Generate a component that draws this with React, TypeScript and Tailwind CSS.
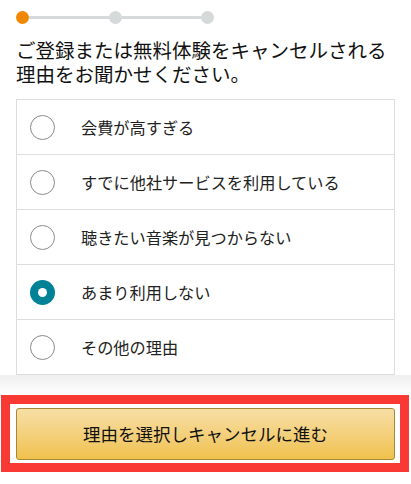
import React, { useState } from 'react';

const reasons = [
  '会費が高すぎる',
  'すでに他社サービスを利用している',
  '聴きたい音楽が見つからない',
  'あまり利用しない',
  'その他の理由',
];

function Radio({ checked }: { checked: boolean }) {
  if (checked) {
    return (
      <span className="w-[25px] h-[25px] rounded-full bg-[#008296] flex items-center justify-center shrink-0">
        <span className="w-[9px] h-[9px] rounded-full bg-white" />
      </span>
    );
  }
  return <span className="w-[25px] h-[25px] rounded-full border border-[#8a8a8a] bg-white shrink-0" />;
}

export default function App() {
  const [selected, setSelected] = useState(3);

  return (
    <div className="w-[411px] h-[484px] bg-white overflow-hidden font-['Noto_Sans_CJK_JP','Noto_Sans',sans-serif] text-[#111]">
      {/* ステップ表示 */}
      <div className="pt-[11px] pl-[16px]">
        <div className="flex items-center w-[198px]">
          <span className="w-[13px] h-[13px] rounded-full bg-[#f08804] shrink-0" />
          <span className="flex-1 h-[3px] bg-[#d5d9d9]" />
          <span className="w-[13px] h-[13px] rounded-full bg-[#d5d9d9] shrink-0" />
          <span className="flex-1 h-[3px] bg-[#d5d9d9]" />
          <span className="w-[13px] h-[13px] rounded-full bg-[#d5d9d9] shrink-0" />
        </div>
      </div>

      <h1 className="mt-[14px] px-[16px] text-[19.5px] leading-[24px] font-normal">
        ご登録または無料体験をキャンセルされる理由をお聞かせください。
      </h1>

      <ul className="mt-[13px] mx-[16px] border border-[#dddddd]">
        {reasons.map((r, i) => (
          <li
            key={r}
            onClick={() => setSelected(i)}
            className={`h-[54px] flex items-center pl-[13px] gap-[26px] cursor-pointer ${
              i < reasons.length - 1 ? 'border-b border-[#dddddd] h-[55px]' : ''
            }`}
          >
            <Radio checked={selected === i} />
            <span className="text-[16.2px] text-[#222]">{r}</span>
          </li>
        ))}
      </ul>

      <div className="h-[20px] bg-linear-to-b from-[#efefef] to-white" />

      <div className="ml-[1px] w-[408px] border-[9px] border-[#f93a34] bg-white pt-[4px] pb-[3px] pl-[6px] pr-[5px]">
        <button className="w-full h-[52px] rounded-[3px] border border-[#a88734] bg-linear-to-b from-[#f7dfa5] to-[#f0c14b] text-[17.5px] text-[#111] flex items-center justify-center">
          理由を選択しキャンセルに進む
        </button>
      </div>
    </div>
  );
}
